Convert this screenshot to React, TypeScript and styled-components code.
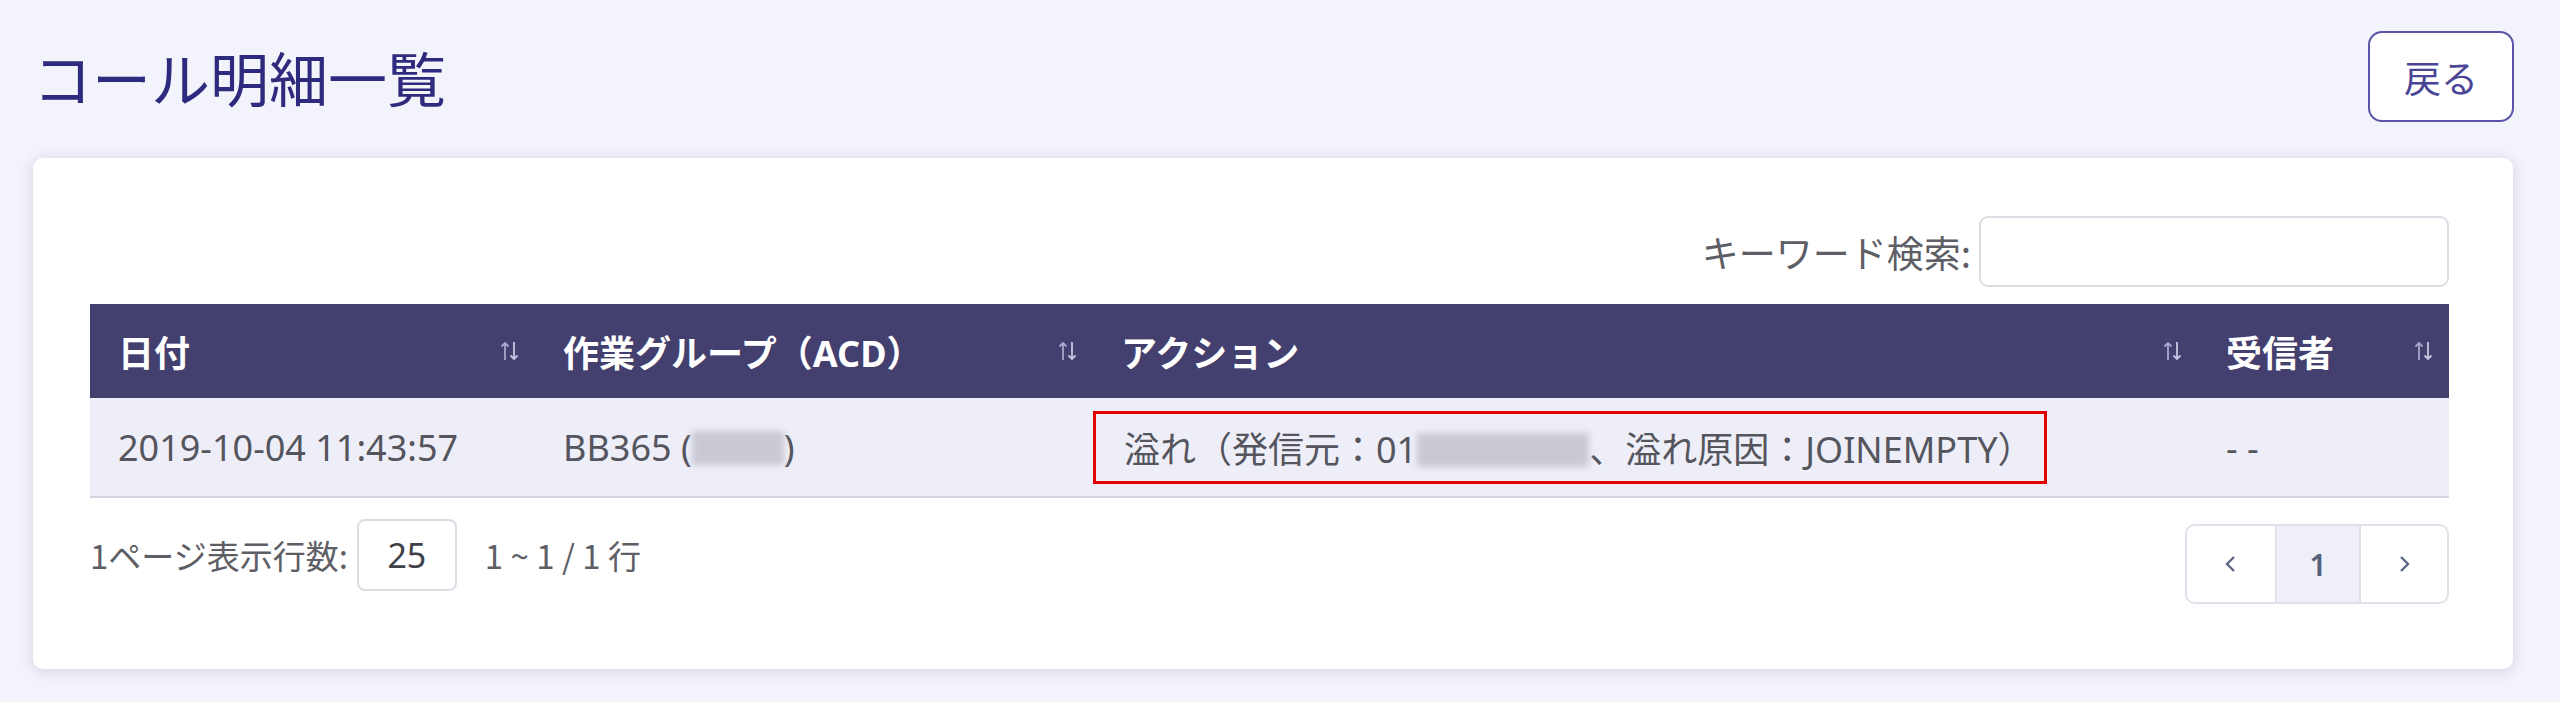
import { createGlobalStyle, styled } from 'styled-components';

const GlobalStyle = createGlobalStyle`
  body {
    margin: 0;
    background: #f3f3fb;
    font-family: 'Noto Sans', 'Noto Sans CJK JP', sans-serif;
    color: #4e4e58;
  }
`;

const SortIcon = () => (
  <SortSvg width="22" height="24" viewBox="0 0 22 24">
    <path d="M6 21V4M2.5 7.5L6 4l3.5 3.5" stroke="#a7a7cc" strokeWidth="1.8" fill="none" />
    <path d="M15 3v17M11.5 16.5L15 20l3.5-3.5" stroke="#c6c6e0" strokeWidth="1.8" fill="none" />
  </SortSvg>
);

const Chevron = ({ dir }: { dir: 'left' | 'right' }) => (
  <svg width="14" height="20" viewBox="0 0 14 20">
    <path
      d={dir === 'left' ? 'M10 3L3 10l7 7' : 'M4 3l7 7-7 7'}
      stroke="#5b6685"
      strokeWidth="2.4"
      fill="none"
    />
  </svg>
);

const columns = [
  { label: '日付', width: 445 },
  { label: '作業グループ（ACD）', width: 558 },
  { label: 'アクション', width: 1105 },
  { label: '受信者', width: 251 },
];

export default function App() {
  return (
    <>
      <GlobalStyle />
      <Page>
        <HeaderRow>
          <Title>コール明細一覧</Title>
          <BackButton>戻る</BackButton>
        </HeaderRow>
        <Card>
          <SearchRow>
            <SearchLabel>キーワード検索:</SearchLabel>
            <SearchInput />
          </SearchRow>
          <Table>
            <colgroup>
              {columns.map((c) => (
                <col key={c.label} style={{ width: c.width }} />
              ))}
            </colgroup>
            <thead>
              <tr>
                {columns.map((c) => (
                  <Th key={c.label}>
                    <ThInner>
                      <span>{c.label}</span>
                      <SortIcon />
                    </ThInner>
                  </Th>
                ))}
              </tr>
            </thead>
            <tbody>
              <tr>
                <Td>2019-10-04 11:43:57</Td>
                <Td>
                  BB365 (<Blur $width={92} />)
                </Td>
                <ActionTd>
                  <Highlight>
                    溢れ（発信元：01<Blur $width={172} />、溢れ原因：JOINEMPTY）
                  </Highlight>
                </ActionTd>
                <Td>- -</Td>
              </tr>
            </tbody>
          </Table>
          <Footer>
            <PageSize>
              <FooterText>1ページ表示行数:</FooterText>
              <SizeBox>25</SizeBox>
              <RangeText>1 ~ 1 / 1 行</RangeText>
            </PageSize>
            <Pager>
              <PagerCell $width={88}>
                <Chevron dir="left" />
              </PagerCell>
              <PagerCell $width={82} $active>
                1
              </PagerCell>
              <PagerCell $width={86}>
                <Chevron dir="right" />
              </PagerCell>
            </Pager>
          </Footer>
        </Card>
      </Page>
    </>
  );
}

const Page = styled.div`
  padding: 31px 47px 30px 33px;
`;

const HeaderRow = styled.header`
  display: flex;
  justify-content: space-between;
  align-items: center;
  margin-bottom: 36px;
`;

const Title = styled.h1`
  margin: 0;
  font-family: 'Noto Sans CJK JP', sans-serif;
  font-size: 59px;
  font-weight: 400;
  color: #2e2b7e;
`;

const BackButton = styled.button`
  width: 146px;
  height: 91px;
  margin-right: -1px;
  border: 2px solid #5a55a8;
  border-radius: 14px;
  background: #ffffff;
  color: #4a4596;
  font-family: 'Noto Sans CJK JP', sans-serif;
  font-size: 37px;
`;

const Card = styled.section`
  background: #ffffff;
  border-radius: 10px;
  box-shadow: 0 2px 14px rgba(90, 90, 150, 0.22);
  padding: 58px 64px 65px 57px;
`;

const SearchRow = styled.div`
  display: flex;
  justify-content: flex-end;
  align-items: center;
  gap: 8px;
  margin-bottom: 17px;
`;

const SearchLabel = styled.label`
  font-family: 'Noto Sans CJK JP', sans-serif;
  font-size: 37px;
  color: #5e5e66;
`;

const SearchInput = styled.input`
  width: 470px;
  height: 71px;
  box-sizing: border-box;
  border: 2px solid #dcdce4;
  border-radius: 9px;
  outline: none;
`;

const Table = styled.table`
  width: 100%;
  table-layout: fixed;
  border-collapse: collapse;
`;

const Th = styled.th`
  height: 94px;
  padding: 0 14px 0 28px;
  background: #433f6e;
  color: #ffffff;
  font-family: 'Noto Sans', 'Noto Sans CJK JP', sans-serif;
  font-size: 36px;
  font-weight: 700;
  text-align: left;
`;

const ThInner = styled.div`
  display: flex;
  justify-content: space-between;
  align-items: center;
`;

const SortSvg = styled.svg`
  flex-shrink: 0;
`;

const Td = styled.td`
  height: 98px;
  padding: 0 0 0 28px;
  background: #eeeef8;
  border-bottom: 2px solid #d4d4de;
  font-size: 36px;
  color: #55555e;
  white-space: nowrap;
`;

const ActionTd = styled(Td)`
  padding-left: 0;
`;

const Highlight = styled.span`
  display: inline-block;
  padding: 7px 10px 7px 28px;
  border: 3px solid #e30000;
`;

const Blur = styled.span<{ $width: number }>`
  display: inline-block;
  width: ${({ $width }) => $width}px;
  height: 34px;
  vertical-align: -4px;
  background: #c9c9d4;
  filter: blur(3px);
`;

const Footer = styled.div`
  display: flex;
  justify-content: space-between;
  align-items: flex-start;
  margin-top: 21px;
`;

const PageSize = styled.div`
  display: flex;
  align-items: center;
`;

const FooterText = styled.span`
  font-family: 'Noto Sans CJK JP', sans-serif;
  font-size: 33px;
  color: #5e5e66;
`;

const SizeBox = styled.div`
  display: flex;
  align-items: center;
  justify-content: center;
  width: 100px;
  height: 72px;
  margin-left: 9px;
  box-sizing: border-box;
  border: 2px solid #dcdce4;
  border-radius: 8px;
  font-size: 34px;
  color: #404048;
`;

const RangeText = styled(FooterText)`
  margin-left: 28px;
`;

const Pager = styled.nav`
  display: flex;
  margin-top: 5px;
  border: 2px solid #e0e0ea;
  border-radius: 10px;
  overflow: hidden;
`;

const PagerCell = styled.div<{ $width: number; $active?: boolean }>`
  display: flex;
  align-items: center;
  justify-content: center;
  width: ${({ $width }) => $width}px;
  height: 76px;
  background: ${({ $active }) => ($active ? '#efeff8' : '#ffffff')};
  border-left: ${({ $active }) => ($active ? '2px solid #e0e0ea' : 'none')};
  border-right: ${({ $active }) => ($active ? '2px solid #e0e0ea' : 'none')};
  font-size: 30px;
  font-weight: 600;
  color: #56607a;
`;
